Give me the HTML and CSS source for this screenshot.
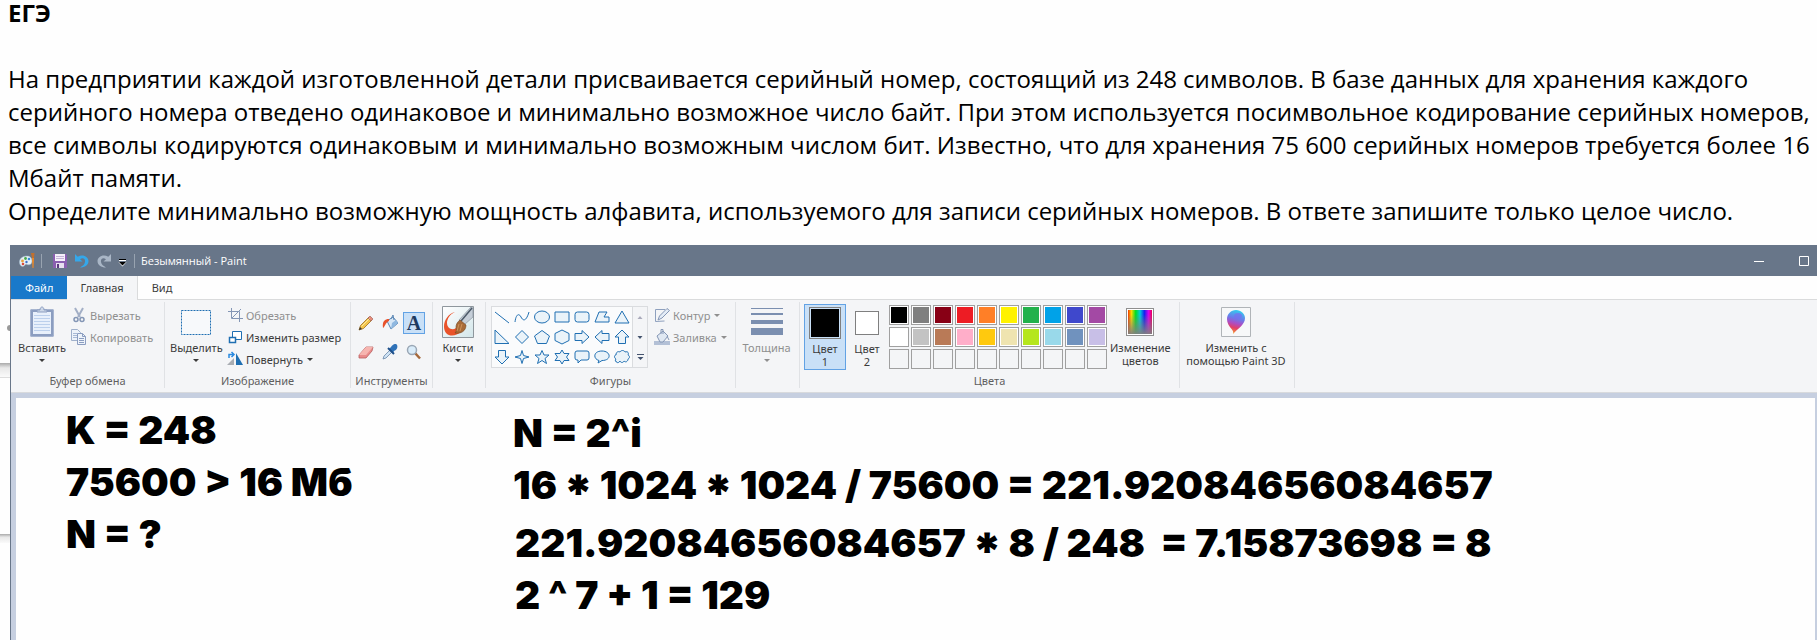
FILE: index.html
```html
<!DOCTYPE html>
<html lang="ru">
<head>
<meta charset="utf-8">
<title>ЕГЭ</title>
<link rel="stylesheet" href="styles.css">
</head>
<body>
<main class="page">
  <section class="task">
    <h1>ЕГЭ</h1>
    <p>На предприятии каждой изготовленной детали присваивается серийный номер, состоящий из 248 символов. В базе данных для хранения каждого<br>серийного номера отведено одинаковое и минимально возможное число байт. При этом используется посимвольное кодирование серийных номеров,<br>все символы кодируются одинаковым и минимально возможным числом бит. Известно, что для хранения 75 600 серийных номеров требуется более 16<br>Мбайт памяти.<br>Определите минимально возможную мощность алфавита, используемого для записи серийных номеров. В ответе запишите только целое число.</p>
  </section>

  <div class="desk">
    <div class="gutter" aria-hidden="true">
      <span class="knob"></span>
      <span class="edge edge-tall"></span>
      <span class="edge edge-short"></span>
    </div>

    <section class="window">
      <header class="titlebar">
        <svg class="i16" viewBox="0 0 16 16"><path d="M8 3C3 3 0 6 .500 10c.5 3 3 4 4.500 3s1-2 3-1.500c3 1 5-.500 5-3.500S11 3 8 3z" fill="#e6f1f8" stroke="#9db6c8" stroke-width=".5"/><circle cx="3.500" cy="8" r="1.400" fill="#e8a33d"/><circle cx="6.500" cy="5.500" r="1.400" fill="#4aa84a"/><circle cx="10" cy="6" r="1.300" fill="#3a8fd8"/><circle cx="4" cy="11" r="1.300" fill="#d84a3a"/><circle cx="7.500" cy="9" r="1.200" fill="#3a6fc8"/><path d="M13 5l2 0-.500 10-1 0z" fill="#f08a24"/><path d="M12 0h3.500L15 5h-2z" fill="#c07030"/></svg>
        <span class="bar"></span>
        <button class="quick" aria-label="Сохранить"><svg class="i16" viewBox="0 0 16 16"><path d="M1 1h13l1 1v13H1z" fill="#8a5fb0"/><path d="M3 1h10v7H3z" fill="#f5f0fa"/><path d="M4 3.500h8M4 5.500h8" stroke="#c5b3d8"/><path d="M4 10h8v5H4z" fill="#e8e0f0"/><path d="M5 11h2v4H5z" fill="#5b3a80"/></svg></button>
        <button class="quick" aria-label="Отменить"><svg class="i16" viewBox="0 0 16 16"><path d="M1 1v7.500h7.500L6 6.300C9 4 11.500 6 11 9c-.400 2.500-2.500 4-5 5.500 5 0 8.500-2.500 8.500-6.500S9 .500 3.700 3.800z" fill="#35a7ea"/></svg></button>
        <button class="quick" aria-label="Вернуть"><svg class="i16" viewBox="0 0 16 16"><path d="M15 1v7.500H7.500L10 6.300C7 4 4.500 6 5 9c.4 2.500 2.500 4 5 5.500-5 0-8.500-2.500-8.500-6.500S7 .500 12.300 3.800z" fill="#a9b6c6"/></svg></button>
        <button class="quick" aria-label="Настройка панели"><svg width="10" height="16" viewBox="4 0 10 16"><path d="M5 6h7v2H5z" fill="#fff"/><path d="M5 6h7v1H5z" fill="#000"/><path d="M4.500 9h8L8.500 13.500z" fill="#fff"/><path d="M5 9h7l-3.500 3.500z" fill="#000"/></svg></button>
        <span class="bar"></span>
        <span class="caption">Безымянный - Paint</span>
        <div class="controls">
          <button aria-label="Свернуть"><svg width="10" height="10" viewBox="0 0 10 10"><path d="M0 5.500h10" stroke="#fff"/></svg></button>
          <button aria-label="Развернуть"><svg width="10" height="10" viewBox="0 0 10 10"><path d="M.5.5h9v9h-9z" fill="none" stroke="#fff"/></svg></button>
        </div>
      </header>

      <nav class="tabs">
        <a class="tab file" href="#file">Файл</a><a class="tab active" href="#home">Главная</a><a class="tab" href="#view">Вид</a>
      </nav>

      <div class="ribbon">
        <section class="group g-clip">
          <div class="tools">
            <button class="big"><span class="pic"><svg width="26" height="32" viewBox="0 0 26 32"><rect x="1" y="3" width="24" height="28" rx="2" fill="#8b9dc0"/><rect x="1.500" y="3.500" width="23" height="27" rx="1.500" fill="none" stroke="#a7b5d0"/><path d="M4 6h18v22H4z" fill="#e8f0fb"/><path d="M5 9.500h16M5 12.500h16M5 15.500h16M5 18.500h16M5 21.500h16M5 24.500h16" stroke="#bcd0ec"/><path d="M8 6V4h3c0-4 4-4 4 0h3v2z" fill="#cdd8e8" stroke="#8b9dc0"/></svg></span>Вставить<i class="caret"></i></button>
            <div class="rows">
              <button class="row off"><svg class="i16" viewBox="0 0 16 16"><path d="M4 1l5 9M12 1L7 10" stroke="#a3afc6" stroke-width="2" fill="none"/><circle cx="5" cy="12.500" r="2" fill="none" stroke="#8496b5" stroke-width="1.500"/><circle cx="11" cy="12.500" r="2" fill="none" stroke="#8496b5" stroke-width="1.500"/></svg>Вырезать</button>
              <button class="row off"><svg class="i16" viewBox="0 0 16 16"><path d="M.5.5h6l3 3v8h-9z" fill="#eef3fa" stroke="#9fb0cb"/><path d="M2 4.500h4M2 6.500h4M2 8.500h4" stroke="#a9bad6"/><path d="M6.500 4.500h5l3 3v8h-8z" fill="#eef3fa" stroke="#8b9dc0"/><path d="M11.500 4.500v3h3M8 9.500h5M8 11.500h5M8 13.500h5" fill="none" stroke="#8b9dc0"/></svg>Копировать</button>
            </div>
          </div>
          <h2>Буфер обмена</h2>
        </section>

        <section class="group g-image">
          <div class="tools">
            <button class="big"><span class="pic"><svg width="30" height="25" viewBox="0 0 30 25"><rect x=".5" y=".5" width="29" height="24" fill="#f7f9fb" stroke="#1f6fb2" stroke-dasharray="2 1"/></svg></span>Выделить<i class="caret"></i></button>
            <div class="rows">
              <button class="row off"><svg class="i16" viewBox="0 0 16 16"><path d="M4.500 1v10.500H16M1 4.500h11.500V15M5 11L14 2" fill="none" stroke="#8496b5"/></svg>Обрезать</button>
              <button class="row"><svg class="i16" viewBox="0 0 16 16"><path d="M5.500 2.500h9v8h-9z" fill="#fff" stroke="#1f6fb2"/><path d="M2.500 8.500h6v5h-6z" fill="#fff" stroke="#1f6fb2" stroke-width="1.500"/></svg>Изменить размер</button>
              <button class="row"><svg class="i16" viewBox="0 0 16 16"><path d="M9 2l7 12H9z" fill="#1f6fb2"/><path d="M7 7v7H0z" fill="#a9adb3"/><path d="M2 7V3.500h4M4.500 1L7 3.500 4.500 6" fill="none" stroke="#2a8ae0" stroke-width="1.500"/></svg>Повернуть<i class="caret"></i></button>
            </div>
          </div>
          <h2>Изображение</h2>
        </section>

        <section class="group g-tools">
          <div class="tools toolgrid">
            <button aria-label="Карандаш"><svg class="i16" viewBox="0 0 16 16"><path d="M1 15l1.500-4.500L11 2l3 3-8.500 8.500z" fill="#f3c54b" stroke="#9a6b20" stroke-width=".8"/><path d="M10 3l2-2 3 3-2 2z" fill="#e58b7b" stroke="#9a5a50" stroke-width=".6"/><path d="M1 15l1-3 2 2z" fill="#333"/><path d="M3.500 11.500l8-8" stroke="#fce9a0"/></svg></button>
            <button aria-label="Заливка"><svg class="i16" viewBox="0 0 16 16"><path d="M5 6l6-4 5 6-7 6z" fill="#d6e6f6" stroke="#5a86b4"/><path d="M9 4l2-4 1 5" fill="none" stroke="#5a86b4"/><path d="M10 8l-1 6 7-6-2-3z" fill="#8fb8e0"/><path d="M7 4C3 4 0 6 1 13c2-1 2-5 6-7z" fill="#e8512a"/></svg></button>
            <button class="chosen" aria-label="Текст"><span class="letter">A</span></button>
            <button aria-label="Ластик"><svg class="i16" viewBox="0 0 16 16"><path d="M1 11l7-8h7l-1 4-6 7H1z" fill="#e98c8c" stroke="#b86060" stroke-width=".8"/><path d="M1 11l7-8h7l-7 8z" fill="#f6b5b0"/></svg></button>
            <button aria-label="Палитра"><svg class="i16" viewBox="0 0 16 16"><path d="M1 15l1-3 6-6 2 2-6 6z" fill="#cfe3f5" stroke="#6b88a8" stroke-width=".8"/><path d="M7 5l4 4 1-2c3-1 4-4 3-6s-4-1-6 2z" fill="#2f72b8"/><path d="M6 4l6 6" stroke="#1d4f8a" stroke-width="2"/></svg></button>
            <button aria-label="Масштаб"><svg class="i16" viewBox="0 0 16 16"><path d="M9 9l5 5.500" stroke="#a5683a" stroke-width="2.500"/><circle cx="6" cy="6" r="4.500" fill="#d9ecfa" stroke="#9aa7b5" stroke-width="1.500"/></svg></button>
          </div>
          <h2>Инструменты</h2>
        </section>

        <section class="group g-brush">
          <div class="tools">
            <button class="big"><span class="pic"><svg width="32" height="32" viewBox="0 0 32 32"><defs><linearGradient id="paper" x2="1" y2="1"><stop offset="0" stop-color="#fff"/><stop offset="1" stop-color="#d3e6ea"/></linearGradient></defs><path d="M.5.5h31v31H.500z" fill="url(#paper)" stroke="#8f979d"/><path d="M13 6C8 8 5 13 5 17c0 5 5 8 9 5l5 4c-5 4-11 5-15 1C-1 20 4 8 13 6z" fill="#e9532a"/><path d="M31 2v9l-9 8-5-5L29 1z" fill="#c5ced8" stroke="#7d8894" stroke-width=".6"/><path d="M30 2L19 15" stroke="#4c5a68" stroke-width="1.500"/><path d="M18 14l6 5c0 6-5 9-11 8 2-2 1-4 1-6s1-5 4-7z" fill="#a86b38" stroke="#75451f" stroke-width=".6"/><path d="M17 18l-2 7M20 18l-2 7" stroke="#cf935a"/></svg></span>Кисти<i class="caret"></i></button>
          </div>
        </section>

        <section class="group g-shapes">
          <div class="tools">
            <div class="gallery">
              <div class="shapes">
                <button aria-label="Линия"><svg viewBox="0 0 16 14"><path d="M1 2l14 11"/></svg></button>
                <button aria-label="Кривая"><svg viewBox="0 0 16 14"><path d="M1 12C2 4 5 3 7 7s5 5 8-5" fill="none"/></svg></button>
                <button aria-label="Овал"><svg viewBox="0 0 16 14"><ellipse cx="8" cy="7" rx="7.500" ry="6"/></svg></button>
                <button aria-label="Прямоугольник"><svg viewBox="0 0 16 14"><path d="M1 2h14v10H1z"/></svg></button>
                <button aria-label="Скруглённый прямоугольник"><svg viewBox="0 0 16 14"><rect x="1" y="2" width="14" height="10" rx="2.500"/></svg></button>
                <button aria-label="Многоугольник"><svg viewBox="0 0 16 14"><path d="M5 2h8l-3 5h5v5H1z"/></svg></button>
                <button aria-label="Треугольник"><svg viewBox="0 0 16 14"><path d="M8 1l7 12H1z"/></svg></button>
                <button aria-label="Прямоугольный треугольник"><svg viewBox="0 0 16 14"><path d="M1 0v13.500h14z"/></svg></button>
                <button aria-label="Ромб"><svg viewBox="0 0 16 14"><path d="M8 .5L14.500 7 8 13.500 1.500 7z"/></svg></button>
                <button aria-label="Пятиугольник"><svg viewBox="0 0 16 14"><path d="M8 .5l7.500 5.500-3 7.500h-9L.500 6z"/></svg></button>
                <button aria-label="Шестиугольник"><svg viewBox="0 0 16 14"><path d="M8 0l7 3.500v7L8 14l-7-3.500v-7z"/></svg></button>
                <button aria-label="Стрелка вправо"><svg viewBox="0 0 16 14"><path d="M1 3.500h7V.500L15 7l-7 6.500v-3H1z"/></svg></button>
                <button aria-label="Стрелка влево"><svg viewBox="0 0 16 14"><path d="M15 3.500H8V.500L1 7l7 6.500v-3h7z"/></svg></button>
                <button aria-label="Стрелка вверх"><svg viewBox="0 0 16 14"><path d="M8 0l7 7h-3.500v6.500h-7V7H1z"/></svg></button>
                <button aria-label="Стрелка вниз"><svg viewBox="0 0 16 14"><path d="M8 14l7-7h-3.500V.500h-7V7H1z"/></svg></button>
                <button aria-label="Звезда с 4 концами"><svg viewBox="0 0 16 14"><path d="M8 .5l1.500 5 5.500 1.500-5.500 1.500L8 13.500l-1.500-5L1 7l5.500-1.500z"/></svg></button>
                <button aria-label="Звезда с 5 концами"><svg viewBox="0 0 16 14"><path d="M8 .5l2 4.500h5l-4 3.500 1.500 5L8 10.500l-4.500 3 1.500-5L1 5h5z"/></svg></button>
                <button aria-label="Звезда с 6 концами"><svg viewBox="0 0 16 14"><path d="M8 0l2 3.500h5L12.500 7l2.500 3.500h-5L8 14l-2-3.500H1L3.500 7 1 3.500h5z"/></svg></button>
                <button aria-label="Прямоугольная выноска"><svg viewBox="0 0 16 14"><path d="M3 1h10q2 0 2 2v5q0 2-2 2H7l-3 3v-3H3q-2 0-2-2V3q0-2 2-2z"/></svg></button>
                <button aria-label="Овальная выноска"><svg viewBox="0 0 16 14"><path d="M4 13l1-2.500C-1 9-1 1 8 1s10 9.500 0 9.500z"/></svg></button>
                <button aria-label="Облако"><svg viewBox="0 0 16 14"><path d="M3 12c-2 0-2-2-1-3C0 8 0 5 2 5c0-3 2-4 4-3 1-2 4-2 5 0 3-1 4 1 3 3 2 1 2 3 0 4 0 2-2 4-4 2-1 2-3 2-4 0-1 2-3 2-3 1z"/></svg></button>
              </div>
              <div class="scroller">
                <button aria-label="Вверх"><svg viewBox="0 0 14 20"><path d="M4.500 12h5L7 9z" fill="#aab"/></svg></button>
                <button aria-label="Вниз"><svg viewBox="0 0 14 20"><path d="M4.500 9h5L7 12z" fill="#44536e"/></svg></button>
                <button aria-label="Ещё"><svg viewBox="0 0 14 20"><path d="M4 7h7v1H4zM4.500 10h6l-3 3z" fill="#44536e"/></svg></button>
              </div>
            </div>
            <div class="rows">
              <button class="row off"><svg class="i16" viewBox="0 0 16 16"><path d="M11 2.500H1.500v12l9-.5" fill="none" stroke="#8ea0be"/><path d="M4 13l1.500-4L13 1.500l2.500 2L8 11z" fill="#e4ecf6" stroke="#8496b5"/></svg>Контур<i class="caret"></i></button>
              <button class="row off"><svg class="i16" viewBox="0 0 16 16"><path d="M0 12h16v4H0z" fill="#b3c0d6"/><path d="M3 7l6-5 5 5-5 6H6z" fill="#e0e8f2" stroke="#8496b5"/><path d="M7 5V.500h2V5M13 7l2 4" fill="none" stroke="#8496b5"/></svg>Заливка<i class="caret"></i></button>
            </div>
          </div>
          <h2>Фигуры</h2>
        </section>

        <section class="group g-size">
          <div class="tools">
            <button class="big off"><span class="pic"><svg width="32" height="28" viewBox="0 0 32 28"><path d="M0 0h32v1H0zM0 5h32v2H0zM0 12h32v4H0zM0 20h32v7H0z" fill="#7b8fb0"/></svg></span>Толщина<i class="caret"></i></button>
          </div>
        </section>

        <section class="group g-colors">
          <div class="tools">
            <button class="big slot chosen"><span class="pic"><span class="chip black"></span></span>Цвет<br>1</button>
            <button class="big slot"><span class="pic"><span class="chip small"></span></span>Цвет<br>2</button>
            <div class="palette">
              <button aria-label="Чёрный" style="background:#000"></button><button aria-label="Серый 50%" style="background:#7f7f7f"></button><button aria-label="Тёмно-красный" style="background:#880015"></button><button aria-label="Красный" style="background:#ed1c24"></button><button aria-label="Оранжевый" style="background:#ff7f27"></button><button aria-label="Жёлтый" style="background:#fff200"></button><button aria-label="Зелёный" style="background:#22b14c"></button><button aria-label="Бирюзовый" style="background:#00a2e8"></button><button aria-label="Индиго" style="background:#3f48cc"></button><button aria-label="Лиловый" style="background:#a349a4"></button>
              <button aria-label="Белый" style="background:#fff"></button><button aria-label="Серый 25%" style="background:#c3c3c3"></button><button aria-label="Коричневый" style="background:#b97a57"></button><button aria-label="Розовый" style="background:#ffaec9"></button><button aria-label="Золотой" style="background:#ffc90e"></button><button aria-label="Светло-жёлтый" style="background:#efe4b0"></button><button aria-label="Травяной" style="background:#b5e61d"></button><button aria-label="Светло-бирюзовый" style="background:#99d9ea"></button><button aria-label="Сизый" style="background:#7092be"></button><button aria-label="Бледно-сиреневый" style="background:#c8bfe7"></button>
              <button class="empty" aria-label="Пусто 1"></button><button class="empty" aria-label="Пусто 2"></button><button class="empty" aria-label="Пусто 3"></button><button class="empty" aria-label="Пусто 4"></button><button class="empty" aria-label="Пусто 5"></button><button class="empty" aria-label="Пусто 6"></button><button class="empty" aria-label="Пусто 7"></button><button class="empty" aria-label="Пусто 8"></button><button class="empty" aria-label="Пусто 9"></button><button class="empty" aria-label="Пусто 10"></button>
            </div>
            <button class="big edit"><span class="pic"><span class="rainbow"></span></span>Изменение<br>цветов</button>
          </div>
          <h2>Цвета</h2>
        </section>

        <section class="group g-3d">
          <div class="tools">
            <button class="big"><span class="pic"><svg width="30" height="30" viewBox="0 0 30 30"><defs><linearGradient id="drop" x1=".6" y1="0" x2=".4" y2="1"><stop offset="0" stop-color="#2fd0ee"/><stop offset=".35" stop-color="#6a7bea"/><stop offset=".55" stop-color="#a94fc8"/><stop offset=".75" stop-color="#e23f6a"/><stop offset="1" stop-color="#f6a02a"/></linearGradient></defs><path d="M.5.500h29v29H.500z" fill="#f7f8f9" stroke="#b0b4b8"/><path d="M12 27c2-4-6-7-6-15 0-5 4-9 9-9s9 4 9 8c0 7-7 10-12 16z" fill="url(#drop)"/><ellipse cx="17" cy="9" rx="4" ry="3" fill="#7b6cf0" opacity=".7"/></svg></span>Изменить с<br>помощью Paint 3D</button>
          </div>
        </section>
      </div>

      <div class="workspace">
        <div class="canvas">
          <div class="notes given">K = 248
75600 &gt; 16 Мб
N = ?</div>
          <div class="solution">
            <div class="notes">N = 2^i
16 * 1024 * 1024 / 75600 = 221.92084656084657</div>
            <div class="notes second">221.92084656084657 * 8 / 248  = 7.15873698 = 8
2 ^ 7 + 1 = 129</div>
          </div>
        </div>
      </div>
    </section>
  </div>
</main>
</body>
</html>
```
FILE: styles.css
```css
* { box-sizing: border-box; }
html, body { height: 100%; }
body {
  margin: 0;
  overflow: hidden;
  background: #fefefe;
  color: #000;
  font-family: "Noto Sans", "Open Sans", sans-serif;
}
button {
  margin: 0;
  padding: 0;
  border: 0;
  background: none;
  color: inherit;
  font: inherit;
}
svg { display: block; flex: none; }
.i16 { width: 16px; height: 16px; }

.page { display: flex; flex-direction: column; min-height: 100vh; }

/* Problem statement */
.task { padding-left: 8px; font-family: "Open Sans", "Noto Sans", sans-serif; white-space: nowrap; }
.task h1 { margin: 0; font-size: 24px; line-height: 26px; }
.task p { margin: 36px 0 18px; font-size: 24px; line-height: 33px; }

.desk { display: flex; flex: 1; }

/* Strip of the page that shows behind the window */
.gutter { width: 10px; flex: none; padding-top: 80px; }
.gutter span { display: block; }
.knob { width: 6px; height: 6px; margin-left: 7px; border-radius: 3px; background: #999; }
.edge { border-bottom: 1px solid #ddd; background: linear-gradient(#aaa, #e8e8e8 35%, #fafafa); }
.edge-tall { height: 15px; margin-top: 32px; }
.edge-short { height: 9px; margin-top: 156px; border: 0; }

/* Window */
.window {
  display: flex;
  flex: 1;
  flex-direction: column;
  min-width: 0;
  overflow: hidden;
  border-left: 1px solid #687689;
  font-size: 11px;
}
.titlebar {
  display: flex;
  align-items: center;
  gap: 6px;
  height: 31px;
  padding-left: 8px;
  background: #687689;
  color: #fff;
}
.bar { width: 1px; height: 14px; background: #98a3b0; }
.bar + .quick { margin-left: 4px; }
.caption { font-family: "Open Sans", "Noto Sans", sans-serif; }
.controls { display: flex; align-self: stretch; margin-left: auto; margin-right: -9px; }
.controls button { display: grid; place-items: center; width: 45px; }

.tabs {
  display: flex;
  height: 24px;
  border-bottom: 1px solid #dadbdc;
  background: #fefefe;
}
.tab { padding: 0 14px; color: #3b3b3b; line-height: 24px; text-decoration: none; }
.file { background: #1979ca; color: #fff; }
.active {
  margin-bottom: -1px;
  padding: 0 13px;
  border-right: 1px solid #dadbdc;
  background: #f4f5f7;
}

/* Ribbon */
.ribbon {
  display: flex;
  padding: 2px 0 4px;
  border-bottom: 1px solid #d8dadd;
  background: #f4f5f7;
  color: #3b3b3b;
}
.group {
  display: flex;
  flex: none;
  flex-direction: column;
  height: 86px;
  border-right: 1px solid #e0e2e5;
}
.group h2 {
  margin: auto 0 0;
  color: #5f5f5f;
  font-size: 11px;
  font-weight: normal;
  line-height: 14px;
  text-align: center;
}
.tools { display: flex; align-items: flex-start; padding: 2px 4px 0; }
.g-clip { width: 154px; }
.g-image { width: 186px; }
.g-tools { width: 82px; }
.g-brush { width: 53px; }
.g-shapes { width: 250px; }
.g-size { width: 64px; }
.g-colors { width: 380px; }
.g-3d { width: 115px; }
.g-brush .tools, .g-size .tools, .g-3d .tools { justify-content: center; padding: 2px 2px 0 0; }

.big {
  display: block;
  border: 1px solid transparent;
  line-height: 13px;
  text-align: center;
  white-space: nowrap;
}
.g-clip .big, .g-image .big { width: 54px; }
.pic { display: grid; place-items: center; height: 36px; padding-bottom: 2px; }
.caret {
  display: inline-block;
  border: 3px solid transparent;
  border-top-color: currentColor;
  border-bottom: 0;
}
.big .caret { display: block; width: 6px; margin: 5px auto; }
.rows { display: flex; flex-direction: column; }
.row { display: flex; align-items: center; gap: 3px; height: 22px; white-space: nowrap; }
.row .caret { margin-left: 1px; }
.g-clip .rows { padding-left: 2px; }
.g-image .rows { padding-left: 4px; }
.off { color: #8f8f8f; }
.chosen { border: 1px solid #62a2e4; background: #c9e0f7; }

.toolgrid {
  display: grid;
  grid-template-columns: repeat(3, 22px);
  gap: 7px 2px;
  padding-top: 10px;
}
.toolgrid button { display: grid; place-items: center; height: 22px; }
.letter { color: #1e3a5f; font: bold 20px/20px "Liberation Serif", serif; }

.gallery { display: flex; margin: 2px 6px 0 1px; border: 1px solid #dadcdf; background: #fafbfc; }
.shapes { display: grid; grid-template-columns: repeat(7, 20px); }
.shapes button { display: grid; place-items: center; height: 20px; }
.shapes svg { width: 16px; height: 14px; overflow: visible; fill: #eaf3f9; stroke: #1f6fb2; }
.scroller { border-left: 1px solid #dadcdf; background: #f4f5f7; }
.scroller button { display: block; }
.scroller svg { width: 14px; height: 20px; }

.slot { width: 42px; height: 66px; }
.chip { width: 32px; height: 32px; border: 1px solid #7f7f7f; background: #fff; }
.small { width: 24px; height: 24px; }
.black { background: #000; box-shadow: inset 0 0 0 1px #c9e0f7; }
.palette { display: grid; grid-template-columns: repeat(10, 20px); gap: 2px; padding: 1px 0 0 1px; }
.palette button { height: 20px; border: 1px solid #a0a0a0; box-shadow: inset 0 0 0 1px #fff; }
.palette .empty { box-shadow: none; }
.rainbow {
  width: 28px;
  height: 28px;
  border: 1px solid #8f8f8f;
  outline: 1px solid #fff;
  outline-offset: -2px;
  background:
    linear-gradient(transparent 20%, #808080),
    linear-gradient(90deg, #e00, #fd0, #0d2, #0cd, #12e, #d0e, #e02);
}
.edit { padding: 0 2px; }

/* Drawing area */
.workspace { display: flex; flex: 1; padding: 5px 2px 0 5px; background: #c6cfe0; }
.canvas { display: flex; flex: 1; background: #fefefe; }
.notes {
  font-family: Inter, "Liberation Sans", sans-serif;
  font-size: 39px;
  font-weight: 900;
  line-height: 52px;
  white-space: pre;
}
.given { width: 447px; margin: 6px 0 0 50px; }
.solution { display: flex; flex-direction: column; gap: 6px; padding-top: 9px; }
.second { padding-left: 2px; }
```
